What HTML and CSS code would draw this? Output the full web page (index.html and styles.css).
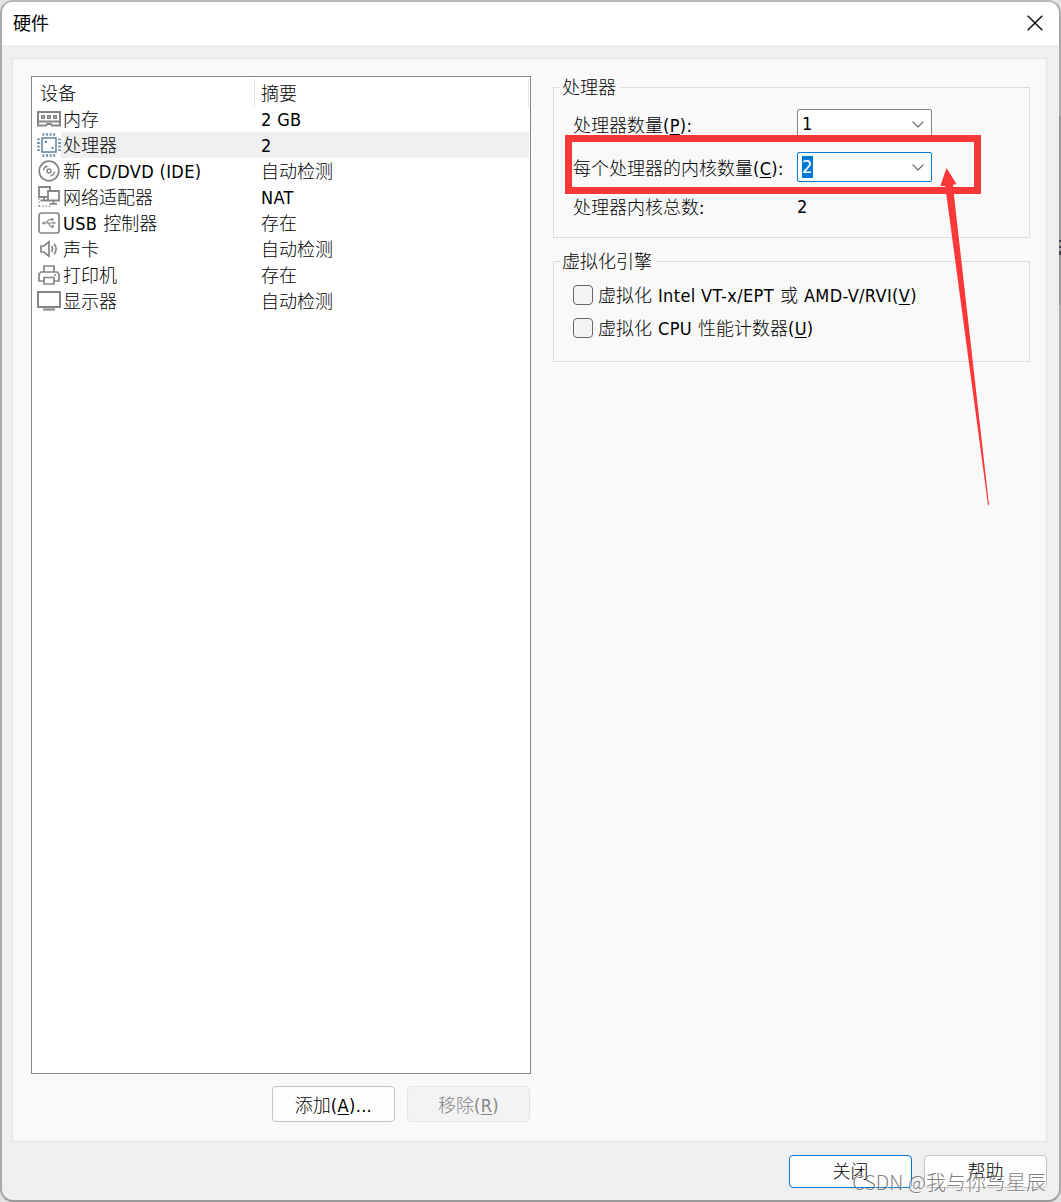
FILE: index.html
```html
<!DOCTYPE html>
<html lang="zh-CN">

<head>
    <meta charset="UTF-8">
    <meta name="viewport" content="width=device-width, initial-scale=1.0">
    <title>硬件</title>
    <link rel="stylesheet" href="styles.css">
</head>

<body>
    <div class="dialog">
        <div class="title-bar">
            <span>硬件</span>
            <svg class="close-icon" width="16" height="16" viewBox="0 0 16 16">
                <path d="M.7 .7L15.3 15.3M15.3 .7L.7 15.3" fill="none" stroke="#111" stroke-width="1.5" />
            </svg>
        </div>

        <div class="panel">
            <div class="left">
                <!-- 设备列表 -->
                <div class="device-list">
                    <div class="row head">
                        <div class="name">设备</div>
                        <div class="summary">摘要</div>
                    </div>
                    <div class="row">
                        <svg class="icon" viewBox="0 0 24 24">
                            <path d="M1 5H23V18.5H15L14 17H10L9 18.5H1ZM1 14.5H23" stroke-width="2" />
                            <path d="M4.8 8.8H7.2V11.2H4.8ZM10.8 8.8H13.2V11.2H10.8ZM16.8 8.8H19.2V11.2H16.8Z" stroke-width="1.6" />
                        </svg>
                        <div class="name">内存</div>
                        <div class="summary"><span class="en">2 GB</span></div>
                    </div>
                    <div class="row active">
                        <svg class="icon cpu" viewBox="0 0 24 24">
                            <rect x="5" y="5" width="14" height="14" stroke-width="1.5" />
                            <path d="M5.5 1.5H19M5.5 22.5H19" stroke-width="2.4" stroke-dasharray="1.8 1.8" />
                            <path d="M1.5 5.5V19M22.5 5.5V19" stroke-width="2.4" stroke-dasharray="1.8 1.8" />
                            <path d="M8 9H10M14.5 15H16.5" stroke-width="2" />
                        </svg>
                        <div class="name">处理器</div>
                        <div class="summary"><span class="en">2</span></div>
                    </div>
                    <div class="row">
                        <svg class="icon" viewBox="0 0 24 24">
                            <circle cx="12" cy="12" r="9.8" stroke-width="1.7" />
                            <circle cx="12" cy="12" r="2" stroke-width="1.5" />
                            <path d="M6.5 11.5A5.5 5.5 0 0 1 10.5 7M17.5 12.5A5.5 5.5 0 0 1 13.5 17" stroke-width="1.4" />
                        </svg>
                        <div class="name">新 <span class="en">CD/DVD (IDE)</span></div>
                        <div class="summary">自动检测</div>
                    </div>
                    <div class="row">
                        <svg class="icon" viewBox="0 0 24 24">
                            <path d="M10 12H2V2H13V5M7 12V15M3.5 15.5H11M11 6H22V15.5H11ZM16.5 15.5V18M12.5 18.8H20" stroke-width="1.8" />
                            <path d="M2 13.5V22M2 21H15" stroke-width="1.3" stroke-dasharray="1.3 2" />
                        </svg>
                        <div class="name">网络适配器</div>
                        <div class="summary"><span class="en">NAT</span></div>
                    </div>
                    <div class="row">
                        <svg class="icon" viewBox="0 0 24 24">
                            <rect x="2" y="2" width="20" height="20" rx="2.5" stroke-width="1.7" />
                            <path d="M6 12H17M8.5 12C10.5 12 10 8.5 13 8.5H15M10.5 12C12.5 12 12 15.5 14 15.5H16" stroke-width="1.2" />
                            <path d="M7.5 10V14L4.8 12ZM16.5 10.5L19 12L16.5 13.5ZM14 7.3H16.3V9.7H14ZM14.5 14.3H16.8V16.7H14.5Z" fill="#858585" stroke="none" />
                        </svg>
                        <div class="name"><span class="en">USB</span> 控制器</div>
                        <div class="summary">存在</div>
                    </div>
                    <div class="row">
                        <svg class="icon" viewBox="0 0 24 24">
                            <path d="M4 9H7L12 4.8V19.2L7 15H4Z" stroke-width="1.7" />
                            <path d="M14.7 9Q16.5 12 14.7 15M17.2 6.8Q21 12 17.2 17.2" stroke-width="1.6" />
                        </svg>
                        <div class="name">声卡</div>
                        <div class="summary">自动检测</div>
                    </div>
                    <div class="row">
                        <svg class="icon" viewBox="0 0 24 24">
                            <path d="M7 9V3H17V9M6 18H2V11L4 9H20L22 11V18H18M7 14.5H17V21H7Z" stroke-width="1.7" />
                            <path d="M17 12H19" stroke-width="1.5" />
                        </svg>
                        <div class="name">打印机</div>
                        <div class="summary">存在</div>
                    </div>
                    <div class="row">
                        <svg class="icon" viewBox="0 0 24 24">
                            <rect x="1" y="3" width="22" height="15" stroke-width="2" />
                            <path d="M6 20.5H18" stroke-width="2" />
                        </svg>
                        <div class="name">显示器</div>
                        <div class="summary">自动检测</div>
                    </div>
                </div>

                <div class="list-btns">
                    <div class="btn">添加<span class="en">(<u>A</u>)...</span></div>
                    <div class="btn disabled">移除<span class="en">(<u>R</u>)</span></div>
                </div>
            </div>

            <div class="right">
                <div class="group cpu-group">
                    <div class="legend">处理器</div>
                    <div class="field">
                        <div class="label">处理器数量<span class="en">(<u>P</u>):</span></div>
                        <div class="select">
                            <span class="en">1</span>
                            <svg width="12" height="7" viewBox="0 0 12 7">
                                <path d="M.6 .6L6 6L11.4 .6" fill="none" stroke="#666" stroke-width="1.2" />
                            </svg>
                        </div>
                    </div>
                    <div class="field">
                        <div class="label">每个处理器的内核数量<span class="en">(<u>C</u>):</span></div>
                        <div class="select focus">
                            <span class="en">2</span>
                            <svg width="12" height="7" viewBox="0 0 12 7">
                                <path d="M.6 .6L6 6L11.4 .6" fill="none" stroke="#666" stroke-width="1.2" />
                            </svg>
                        </div>
                    </div>
                    <div class="field total">
                        <div class="label">处理器内核总数<span class="en">:</span></div>
                        <span class="en">2</span>
                    </div>
                    <!-- 红框标注 -->
                    <div class="mark"></div>
                    <svg class="arrow" width="50" height="338" viewBox="0 0 50 338">
                        <path d="M6.5 0L16.5 16L12.8 17L49 337H48L5.2 18L.3 18Z" fill="#fb3838" />
                    </svg>
                </div>

                <div class="group vt-group">
                    <div class="legend">虚拟化引擎</div>
                    <div class="check">
                        <i></i>
                        <span>虚拟化 <span class="en">Intel VT-x/EPT</span> 或 <span class="en">AMD-V/RVI(<u>V</u>)</span></span>
                    </div>
                    <div class="check">
                        <i></i>
                        <span>虚拟化 <span class="en">CPU</span> 性能计数器<span class="en">(<u>U</u>)</span></span>
                    </div>
                </div>
            </div>
        </div>

        <div class="footer">
            <div class="btn primary">关闭</div>
            <div class="btn">帮助</div>
        </div>
    </div>
    <div class="edge"></div>
    <div class="watermark">CSDN @我与你与星辰</div>
</body>

</html>
```

FILE: styles.css
```css
body {
    position: relative;
    width: 1061px;
    height: 1202px;
    margin: 0;
    overflow: hidden;
    background-color: #e4e4e4;
    color: #000;
    font: 300 18px/26px "Noto Sans CJK SC", sans-serif;
    word-spacing: 2px;
    white-space: nowrap;
}

div {
    box-sizing: border-box;
}

/* 英文和数字用接近 Tahoma 的字体 */
.en {
    font-family: "DejaVu Sans Condensed", "DejaVu Sans", sans-serif;
    font-stretch: condensed;
    font-weight: 400;
    letter-spacing: .35px;
    word-spacing: 0;
}

u {
    text-decoration-thickness: 1px;
    text-underline-offset: 2px;
}

.dialog {
    display: flex;
    flex-direction: column;
    height: 1202px;
    border: 2px solid #aaa;
    border-top-color: #b6b6b6;
    border-bottom-color: #999;
    border-radius: 13px;
    background-color: #efefef;
    overflow: hidden;
}

.title-bar {
    display: flex;
    justify-content: space-between;
    align-items: center;
    height: 43px;
    padding: 0 16px 4px 11px;
    background-color: #fff;
    font-weight: 400;
}

.close-icon {
    margin-top: 2px;
}

.panel {
    display: flex;
    gap: 22px;
    width: 1035px;
    height: 1084px;
    margin: 13px 0 0 10px;
    padding: 17px 16px 0 18px;
    border: 1px solid #e3e3e3;
    background-color: #f9f9f9;
}

.left {
    width: 500px;
}

.device-list {
    height: 998px;
    padding: 3px 1px 0 5px;
    border: 1px solid #828790;
    background-color: #fff;
}

.row {
    display: flex;
    align-items: center;
    height: 26px;
}

.icon {
    flex: none;
    width: 24px;
    height: 24px;
    fill: none;
    stroke: #858585;
}

.icon.cpu {
    stroke: #5c83a0;
}

.name,
.summary {
    height: 26px;
    line-height: 24px;
}

.name {
    width: 193px;
    padding-left: 2px;
}

.summary {
    flex: 1;
    padding-left: 7px;
}

.active .name,
.active .summary {
    background-color: #efefef;
}

.head .name {
    width: 218px;
    height: 28px;
    padding-left: 3px;
    border-right: 1px solid #e5e5e5;
    line-height: 26px;
}

.head .summary {
    height: 28px;
    padding-left: 6px;
    border-right: 1px solid #e5e5e5;
    line-height: 26px;
}

.list-btns {
    display: flex;
    justify-content: flex-end;
    gap: 12px;
    margin-top: 12px;
    padding-right: 1px;
}

.btn {
    width: 123px;
    height: 36px;
    border: 1px solid #c4c4c4;
    border-radius: 4px;
    background-color: #fdfdfd;
    line-height: 34px;
    text-align: center;
}

.btn.disabled {
    border-color: #e2e2e2;
    background-color: #f3f3f3;
    color: #858585;
}

.btn.primary {
    border-color: #0078d4;
}

.right {
    flex: 1;
    padding-top: 11px;
}

.group {
    position: relative;
    border: 1px solid #dcdcdc;
}

.legend {
    width: max-content;
    height: 26px;
    margin: -13px 0 0 6px;
    padding: 0 4px 0 2px;
    background-color: #f9f9f9;
    line-height: 23px;
}

.cpu-group {
    height: 151px;
}

.field {
    display: flex;
    align-items: center;
    height: 30px;
    margin: 8px 0 13px 19px;
}

.label {
    width: 224px;
    line-height: 30px;
    padding-top: 2px;
}

.field + .field {
    margin-top: 0;
}

.field.total {
    height: 26px;
    margin: -1px 0 0 19px;
}

.total .label {
    padding-top: 0;
}

.select {
    display: flex;
    justify-content: space-between;
    align-items: center;
    width: 135px;
    height: 30px;
    padding: 0 7px 0 4px;
    border: 1px solid #868686;
    border-radius: 2px;
    background-color: #fff;
}

.select .en {
    height: 22px;
    line-height: 22px;
}

.select.focus {
    border-color: #0078d4;
}

.select.focus .en {
    background-color: #0078d7;
    color: #fff;
}

.mark {
    position: absolute;
    top: 47px;
    left: 11px;
    width: 416px;
    height: 59px;
    border: 7px solid #fb3838;
}

.arrow {
    position: absolute;
    top: 80px;
    left: 386px;
    z-index: 1;
}

.vt-group {
    height: 101px;
    margin-top: 23px;
}

.check {
    display: flex;
    align-items: center;
    gap: 5px;
    height: 33px;
    margin-left: 19px;
}

.legend + .check {
    margin-top: 3px;
}

.check i {
    box-sizing: border-box;
    width: 20px;
    height: 20px;
    border: 1px solid #666;
    border-radius: 4px;
    background-color: #f4f4f4;
}

.footer {
    display: flex;
    justify-content: flex-end;
    gap: 12px;
    padding: 13px 12px 0 0;
}

.footer .btn {
    height: 33px;
    line-height: 29px;
}

.edge {
    position: absolute;
    top: 116px;
    right: 0;
    width: 2px;
    height: 189px;
    background: linear-gradient(#999 124px, #445 124px, #445 126px, #999 126px, #999 130px, #445 130px, #445 132px, #999 132px, #999 135px, #445 135px, #445 139px, #999 139px);
}

.watermark {
    position: absolute;
    right: 15px;
    bottom: 6px;
    color: rgba(95, 95, 95, .8);
    font: 300 20px/28px "Noto Sans CJK SC", sans-serif;
    word-spacing: 0;
    text-shadow: 1px 1px 1px rgba(255, 255, 255, .8);
}
```
